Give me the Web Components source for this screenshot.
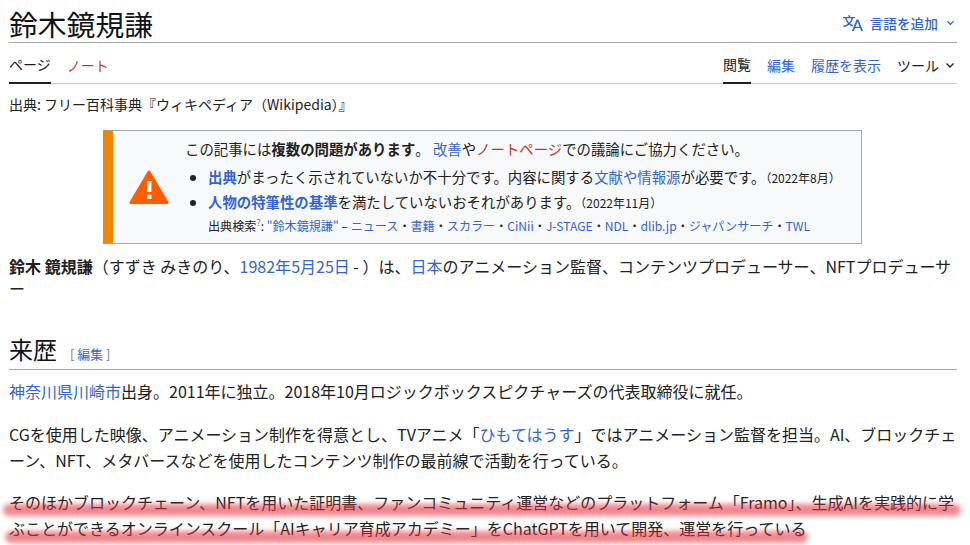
<!DOCTYPE html>
<html lang="ja">
<head>
<meta charset="utf-8">
<title>鈴木鏡規謙</title>
<style>
  html, body { margin: 0; padding: 0; background: #fff; overflow: hidden; }
  body { width: 970px; height: 545px; font-family: "Noto Sans CJK JP", "Noto Sans", sans-serif; color: #202122; }
  wiki-para a { color: #3366cc; text-decoration: none; }
</style>
</head>
<body>
<wiki-page>
  <page-title slot="top" label="鈴木鏡規謙"></page-title>
  <page-tabs slot="top"></page-tabs>
  <site-sub slot="top"></site-sub>
  <issue-box></issue-box>
  <wiki-para class="lead" style="line-height:22px;margin-top:11px"><b>鈴木 鏡規謙</b>（すずき みきのり、<a>1982年</a><a>5月25日</a> - ）は、<a>日本</a>のアニメーション監督、コンテンツプロデューサー、NFTプロデューサー</wiki-para>
  <section-head label="来歴"></section-head>
  <wiki-para style="margin-top:8px"><a>神奈川県</a><a>川崎市</a>出身。2011年に独立。2018年10月ロジックボックスピクチャーズの代表取締役に就任。</wiki-para>
  <wiki-para style="margin-top:17px">CGを使用した映像、アニメーション制作を得意とし、TVアニメ「<a>ひもてはうす</a>」ではアニメーション監督を担当。AI、ブロックチェーン、NFT、メタバースなどを使用したコンテンツ制作の最前線で活動を行っている。</wiki-para>
  <marker-para>そのほかブロックチェーン、NFTを用いた証明書、ファンコミュニティ運営などのプラットフォーム「Framo」、生成AIを実践的に学ぶことができるオンラインスクール「AIキャリア育成アカデミー」をChatGPTを用いて開発、運営を行っている</marker-para>
</wiki-page>

<script>
class WikiPage extends HTMLElement {
  connectedCallback() {
    this.attachShadow({ mode: 'open' });
    this.shadowRoot.innerHTML = `
      <style>
        :host { display: block; padding: 0 13px 0 9px; height: 545px; box-sizing: border-box; overflow: hidden; }
      </style>
      <slot name="top"></slot>
      <slot></slot>`;
  }
}

class PageTitle extends HTMLElement {
  connectedCallback() {
    this.attachShadow({ mode: 'open' });
    this.shadowRoot.innerHTML = `
      <style>
        :host { display: flex; justify-content: space-between; align-items: flex-start; height: 42px; border-bottom: 1px solid #a2a9b1; }
        h1 { margin: 0; font: 400 28.8px/47px "Noto Sans CJK JP", sans-serif; color: #101418; }
        .lang { display: flex; align-items: center; height: 46px; margin-right: 2px; color: #3366cc; font-size: 13.7px; font-weight: 500; }
        .lang svg { margin-right: 7px; }
        .lang .chev { margin: -2px 0 0 8px; }
      </style>
      <h1>${this.getAttribute('label')}</h1>
      <div class="lang">
        <svg width="20" height="20" viewBox="0 0 20 20" fill="#3366cc"><path d="M20 18h-1.44a.6.6 0 0 1-.4-.12.8.8 0 0 1-.23-.31L17 15h-5l-1 2.54a.8.8 0 0 1-.22.3.6.6 0 0 1-.4.14H9l4.55-11.47h1.89zm-3.53-4.31L14.89 9.5a12 12 0 0 1-.39-1.24q-.09.37-.19.69l-.19.56-1.58 4.19zm-6.3-1.58a13.4 13.4 0 0 1-2.91-1.41 11.46 11.46 0 0 0 2.81-5.37H12V4H7.31a4 4 0 0 0-.2-.56C6.87 2.79 6.6 2 6.6 2l-1.47.5s.4.89.6 1.5H0v1.33h2.15A11.23 11.23 0 0 0 5 10.7a17.2 17.2 0 0 1-5 2.1q.56.82.87 1.38a23.3 23.3 0 0 0 5.22-2.51 15.6 15.6 0 0 0 3.56 1.77zM3.63 5.33h4.91a8.1 8.1 0 0 1-2.45 4.45 9.1 9.1 0 0 1-2.46-4.45"/></svg>
        <span>言語を追加</span>
        <svg class="chev" width="9" height="9" viewBox="0 0 10 10" fill="none" stroke="#3366cc" stroke-width="1.4"><path d="M1.5 3.5 5 7l3.5-3.5"/></svg>
      </div>`;
  }
}

class PageTabs extends HTMLElement {
  connectedCallback() {
    this.attachShadow({ mode: 'open' });
    this.shadowRoot.innerHTML = `
      <style>
        :host { display: flex; justify-content: space-between; height: 40px; border-bottom: 1px solid #c8ccd1; font-size: 14px; }
        nav { display: flex; gap: 16px; }
        span { display: flex; align-items: center; height: 40px; box-sizing: border-box; padding-top: 3px; color: #3366cc; }
        .on { color: #202122; border-bottom: 2px solid #202122; margin-bottom: -1px; height: 41px; }
        .red { color: #bf3c2c; }
        .tools { color: #202122; margin-right: 2px; }
        svg { margin-left: 6px; }
      </style>
      <nav><span class="on">ページ</span><span class="red">ノート</span></nav>
      <nav><span class="on">閲覧</span><span>編集</span><span>履歴を表示</span>
        <span class="tools">ツール<svg width="10" height="10" viewBox="0 0 10 10" fill="none" stroke="#202122" stroke-width="1.3"><path d="M1.5 3.5 5 7l3.5-3.5"/></svg></span></nav>`;
  }
}

class SiteSub extends HTMLElement {
  connectedCallback() {
    this.attachShadow({ mode: 'open' });
    this.shadowRoot.innerHTML = `
      <style>:host { display: block; font-size: 14px; line-height: 20px; margin-top: 10px; color: #202122; }</style>
      出典: フリー百科事典『ウィキペディア（Wikipedia）』`;
  }
}

class IssueBox extends HTMLElement {
  connectedCallback() {
    this.attachShadow({ mode: 'open' });
    this.shadowRoot.innerHTML = `
      <style>
        :host { display: flex; box-sizing: border-box; width: 759px; height: 114px; margin: 16px 0 0 94px; background: #f8f9fa; border: 1px solid #a2a9b1; border-left: 10px solid #f28500; font-size: 14.4px; color: #202122; }
        .icon { width: 72px; flex: none; display: flex; align-items: center; justify-content: center; }
        .body { padding-top: 7px; flex: 1; }
        p { margin: 0; line-height: 21px; }
        ul { margin: 6px 0 0; padding: 0 0 0 23px; line-height: 24px; }
        a { color: #3366cc; text-decoration: none; }
        a.red { color: #bf3c2c; }
        small { font-size: 12px; }
        .search { font-size: 12.1px; line-height: 20px; margin: 1px 0 0 23px; }
        sup { font-size: 9px; line-height: 0; color: #72777d; }
      </style>
      <div class="icon">
        <svg width="40" height="35" viewBox="0 0 40 35"><path d="M20 2 38 32.5H2z" fill="#ff5d00" stroke="#ff5d00" stroke-width="3" stroke-linejoin="round"/><rect x="18" y="11" width="4.4" height="11" fill="#fff"/><rect x="18" y="24.6" width="4.4" height="4.4" fill="#fff"/></svg>
      </div>
      <div class="body">
        <p>この記事には<b>複数の問題があります</b>。 <a>改善</a>や<a class="red">ノートページ</a>での議論にご協力ください。</p>
        <ul>
          <li><a><b>出典</b></a>がまったく示されていないか不十分です。内容に関する<a>文献や情報源</a>が必要です。<small>（2022年8月）</small></li>
          <li><a><b>人物の特筆性の基準</b></a>を満たしていないおそれがあります。<small>（2022年11月）</small></li>
        </ul>
        <div class="search">出典検索<sup>?</sup>: <a>"鈴木鏡規謙"</a> – <a>ニュース</a>・<a>書籍</a>・<a>スカラー</a>・<a>CiNii</a>・<a>J-STAGE</a>・<a>NDL</a>・<a>dlib.jp</a>・<a>ジャパンサーチ</a>・<a>TWL</a></div>
      </div>`;
  }
}

class WikiPara extends HTMLElement {
  connectedCallback() {
    this.attachShadow({ mode: 'open' });
    this.shadowRoot.innerHTML = `
      <style>
        :host { display: block; font-size: 16px; line-height: 26px; margin-top: 16px; }
      </style>
      <slot></slot>`;
  }
}

class SectionHead extends HTMLElement {
  connectedCallback() {
    this.attachShadow({ mode: 'open' });
    this.shadowRoot.innerHTML = `
      <style>
        :host { display: flex; align-items: baseline; height: 38px; margin-top: 32px; border-bottom: 1px solid #a2a9b1; }
        h2 { margin: 0; font: 400 24px/36px "Noto Sans CJK JP", sans-serif; color: #101418; }
        span { margin-left: 13px; font-size: 12.8px; color: #72777d; }
        a { color: #3366cc; margin: 0 3px; }
      </style>
      <h2>${this.getAttribute('label')}</h2>
      <span>[<a>編集</a>]</span>`;
  }
}

class MarkerPara extends HTMLElement {
  connectedCallback() {
    this.attachShadow({ mode: 'open' });
    this.shadowRoot.innerHTML = `
      <style>
        :host { display: block; position: relative; font-size: 16px; line-height: 26px; margin-top: 16px; }
        .stroke { position: absolute; height: 12px; border-radius: 6px; background: rgba(228, 50, 60, .58); filter: blur(2.5px); }
        .one { left: -6px; top: 15px; width: 958px; }
        .two { left: -4px; top: 42px; width: 803px; }
      </style>
      <slot></slot>
      <div class="stroke one"></div>
      <div class="stroke two"></div>`;
  }
}

customElements.define('wiki-page', WikiPage);
customElements.define('page-title', PageTitle);
customElements.define('page-tabs', PageTabs);
customElements.define('site-sub', SiteSub);
customElements.define('issue-box', IssueBox);
customElements.define('wiki-para', WikiPara);
customElements.define('section-head', SectionHead);
customElements.define('marker-para', MarkerPara);
</script>
</body>
</html>
